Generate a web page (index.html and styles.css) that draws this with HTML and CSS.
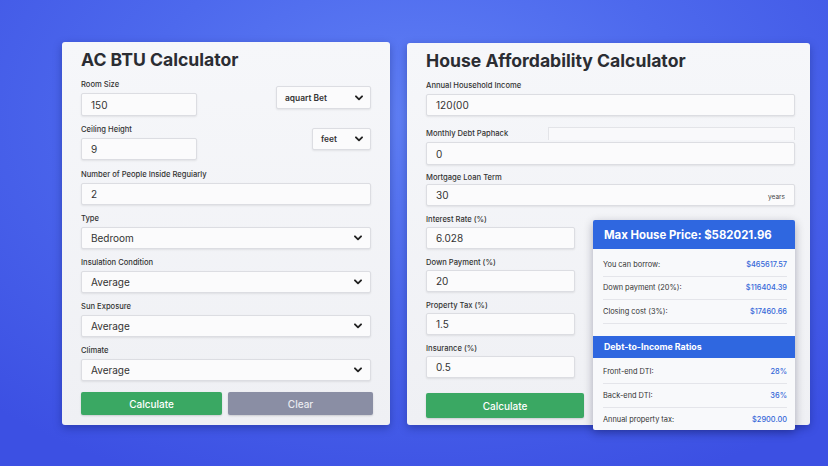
FILE: index.html
```html
<!DOCTYPE html>
<html lang="en">
  <head>
    <meta charset="UTF-8" />
    <meta name="viewport" content="width=device-width, initial-scale=1.0" />
    <title>Calculators</title>
    <link rel="stylesheet" href="styles.css">
  </head>
  <body>
    <div class="page">
      <!-- AC BTU -->
      <section class="card card-btu">
        <h2 class="card-title">AC BTU Calculator</h2>

        <div class="split-row row-size">
          <div class="field field-short">
            <label>Room Size</label>
            <div class="input input-tall">150</div>
          </div>
          <div class="select select-area">
            <span>aquart Bet</span>
            <svg class="chev" viewBox="0 0 10 7"><polyline points="1.2,1.4 5,5.2 8.8,1.4" /></svg>
          </div>
        </div>

        <div class="split-row row-height">
          <div class="field field-short">
            <label>Ceiling Height</label>
            <div class="input">9</div>
          </div>
          <div class="select select-feet">
            <span>feet</span>
            <svg class="chev" viewBox="0 0 10 7"><polyline points="1.2,1.4 5,5.2 8.8,1.4" /></svg>
          </div>
        </div>

        <div class="field">
          <label>Number of People Inside Reguiarly</label>
          <div class="input">2</div>
        </div>

        <div class="field">
          <label>Type</label>
          <div class="select select-full">
            <span>Bedroom</span>
            <svg class="chev" viewBox="0 0 10 7"><polyline points="1.2,1.4 5,5.2 8.8,1.4" /></svg>
          </div>
        </div>

        <div class="field">
          <label>Insulation Condition</label>
          <div class="select select-full">
            <span>Average</span>
            <svg class="chev" viewBox="0 0 10 7"><polyline points="1.2,1.4 5,5.2 8.8,1.4" /></svg>
          </div>
        </div>

        <div class="field">
          <label>Sun Exposure</label>
          <div class="select select-full">
            <span>Average</span>
            <svg class="chev" viewBox="0 0 10 7"><polyline points="1.2,1.4 5,5.2 8.8,1.4" /></svg>
          </div>
        </div>

        <div class="field field-last">
          <label>Climate</label>
          <div class="select select-full">
            <span>Average</span>
            <svg class="chev" viewBox="0 0 10 7"><polyline points="1.2,1.4 5,5.2 8.8,1.4" /></svg>
          </div>
        </div>

        <div class="buttons">
          <button class="btn btn-green btn-calc">Calculate</button>
          <button class="btn btn-gray btn-clear">Clear</button>
        </div>
      </section>

      <!-- House affordability -->
      <section class="card card-house">
        <h2 class="card-title">House Affordability Calculator</h2>

        <div class="field field-income">
          <label>Annual Household Income</label>
          <div class="input">120(00</div>
        </div>

        <div class="field field-debt">
          <div class="label-row">
            <label>Monthly Debt Paphack</label>
            <div class="ghost-box"></div>
          </div>
          <div class="input input-tall">0</div>
        </div>

        <div class="field field-term">
          <label>Mortgage Loan Term</label>
          <div class="input input-suffix">
            <span>30</span>
            <span class="suffix">years</span>
          </div>
        </div>

        <div class="field field-half">
          <label>Interest Rate (%)</label>
          <div class="input">6.028</div>
        </div>

        <div class="field field-half">
          <label>Down Payment (%)</label>
          <div class="input">20</div>
        </div>

        <div class="field field-half">
          <label>Property Tax (%)</label>
          <div class="input">1.5</div>
        </div>

        <div class="field field-half">
          <label>Insurance (%)</label>
          <div class="input">0.5</div>
        </div>

        <button class="btn btn-green btn-house">Calculate</button>

        <!-- result panel sits over the form -->
        <div class="result">
          <div class="result-head">Max House Price: $582021.96</div>
          <div class="result-rows">
            <div class="result-row"><span>You can borrow:</span><span class="val">$465617.57</span></div>
            <div class="result-row"><span>Down payment (20%):</span><span class="val">$116404.39</span></div>
            <div class="result-row"><span>Closing cost (3%):</span><span class="val">$17460.66</span></div>
          </div>
          <div class="result-sub">Debt-to-Income Ratios</div>
          <div class="result-rows rows-dti">
            <div class="result-row"><span>Front-end DTI:</span><span class="val">28%</span></div>
            <div class="result-row"><span>Back-end DTI:</span><span class="val">36%</span></div>
            <div class="result-row"><span>Annual property tax:</span><span class="val">$2900.00</span></div>
          </div>
        </div>
      </section>
    </div>
  </body>
</html>
```

FILE: styles.css
```css
* {
  box-sizing: border-box;
}

body {
  margin: 0;
  width: 828px;
  height: 466px;
  overflow: hidden;
  font-family: Inter, 'Open Sans', Arial, sans-serif;
  color: #2f3136;
  background: radial-gradient(ellipse 75% 85% at 50% 25%, #6080f5 0%, #4d69ed 45%, #3c50e3 100%);
}

.page {
  display: flex;
  align-items: flex-start;
  gap: 17px;
  padding: 42px 0 0 62px;
}

.card {
  position: relative;
  background: linear-gradient(180deg, #f6f7fa 0%, #eff0f4 100%);
  border-radius: 3px;
  box-shadow: 0 3px 8px rgba(10, 20, 90, 0.35);
  padding: 6px 19px 0;
}

.card-btu {
  width: 328px;
  height: 383px;
}

.card-house {
  width: 403px;
  height: 382px;
  margin-top: 1px;
  padding-right: 15px;
}

.card-title {
  margin: 0 0 7px;
  font-size: 17.6px;
  line-height: 24px;
  font-weight: 700;
  color: #2b2d33;
}

label {
  display: block;
  font-size: 7.6px;
  line-height: 11px;
  font-weight: 500;
  color: #333;
  margin-bottom: 3px;
}

.field {
  margin-bottom: 8px;
}

.input,
.select {
  height: 22px;
  display: flex;
  align-items: center;
  padding: 0 9px;
  background: #fbfbfc;
  border: 1px solid #dcdde2;
  border-radius: 2px;
  box-shadow: 0 1px 2px rgba(0, 0, 0, 0.08);
  font-size: 10px;
  color: #333;
}

.input-tall {
  height: 23px;
}

.select {
  justify-content: space-between;
  padding-right: 8px;
}

.chev {
  flex: none;
  width: 8px;
  height: 6px;
  fill: none;
  stroke: #222;
  stroke-width: 2.3;
  stroke-linecap: round;
  stroke-linejoin: round;
}

/* two top rows: short input left, unit select right */
.split-row {
  display: flex;
  justify-content: space-between;
  align-items: flex-start;
  margin-bottom: 8px;
}

.row-height {
  margin-bottom: 9px;
}

.field-short {
  width: 116px;
  margin-bottom: 0;
}

.select-area {
  width: 95px;
  height: 23px;
  margin-top: 7px;
  font-size: 8.4px;
  font-weight: 600;
  padding: 0 7px 0 8px;
}

.select-feet {
  width: 59px;
  margin-top: 4px;
  font-size: 8.4px;
  font-weight: 600;
  padding: 0 7px 0 8px;
}

.field-last {
  margin-bottom: 11px;
}

.buttons {
  display: flex;
  gap: 6px;
  width: 292px;
}

.btn {
  height: 23px;
  border: none;
  border-radius: 2px;
  font-family: inherit;
  font-size: 10px;
  font-weight: 500;
  color: #fff;
  cursor: pointer;
  box-shadow: 0 1px 2px rgba(0, 0, 0, 0.15);
}

.btn-green {
  background: #3aa863;
}

.btn-gray {
  background: #8a8ea4;
  color: #e9eaf0;
}

.btn-calc {
  width: 141px;
}

.btn-clear {
  width: 145px;
}

/* house card */
.field-income {
  margin-bottom: 11px;
}

.label-row {
  display: flex;
  align-items: flex-start;
  margin-bottom: 2px;
}

.label-row label {
  width: 122px;
  margin: 1px 0 0;
}

.ghost-box {
  flex: 1;
  height: 13px;
  border: 1px solid #e3e4e8;
  border-bottom: none;
  background: #f9f9fb;
}

.field-debt {
  margin-bottom: 7px;
}

.field-term label {
  margin-bottom: 1px;
}

.input-suffix {
  justify-content: space-between;
}

.suffix {
  font-size: 6.5px;
  margin-top: 3px;
  color: #444;
}

.field-half .input {
  width: 149px;
}

.field-half label {
  margin-bottom: 2px;
}

.btn-house {
  margin-top: 7px;
  width: 158px;
  height: 25px;
}

/* result overlay */
.result {
  position: absolute;
  left: 186px;
  top: 177px;
  width: 202px;
  height: 210px;
  background: #f8f9fb;
  border-radius: 2px;
  box-shadow: 0 3px 10px rgba(0, 0, 40, 0.3);
  overflow: hidden;
}

.result-head {
  height: 29px;
  display: flex;
  align-items: center;
  padding: 0 11px;
  background: #2f67e0;
  color: #fff;
  font-size: 11.4px;
  font-weight: 700;
}

.result-rows {
  padding: 4px 8px 0 10px;
}

.result-row {
  height: 23.5px;
  display: flex;
  align-items: center;
  justify-content: space-between;
  border-bottom: 1px solid #e4e5ea;
  font-size: 7.4px;
  color: #333;
}

.result-row .val {
  color: #3467d8;
  font-weight: 500;
}

.result-sub {
  margin-top: 12px;
  height: 22px;
  display: flex;
  align-items: center;
  padding: 0 11px;
  background: #2f67e0;
  color: #fff;
  font-size: 8.8px;
  font-weight: 700;
}

.rows-dti {
  padding-top: 3px;
}

.rows-dti .result-row:last-child {
  border-bottom: none;
}
```
